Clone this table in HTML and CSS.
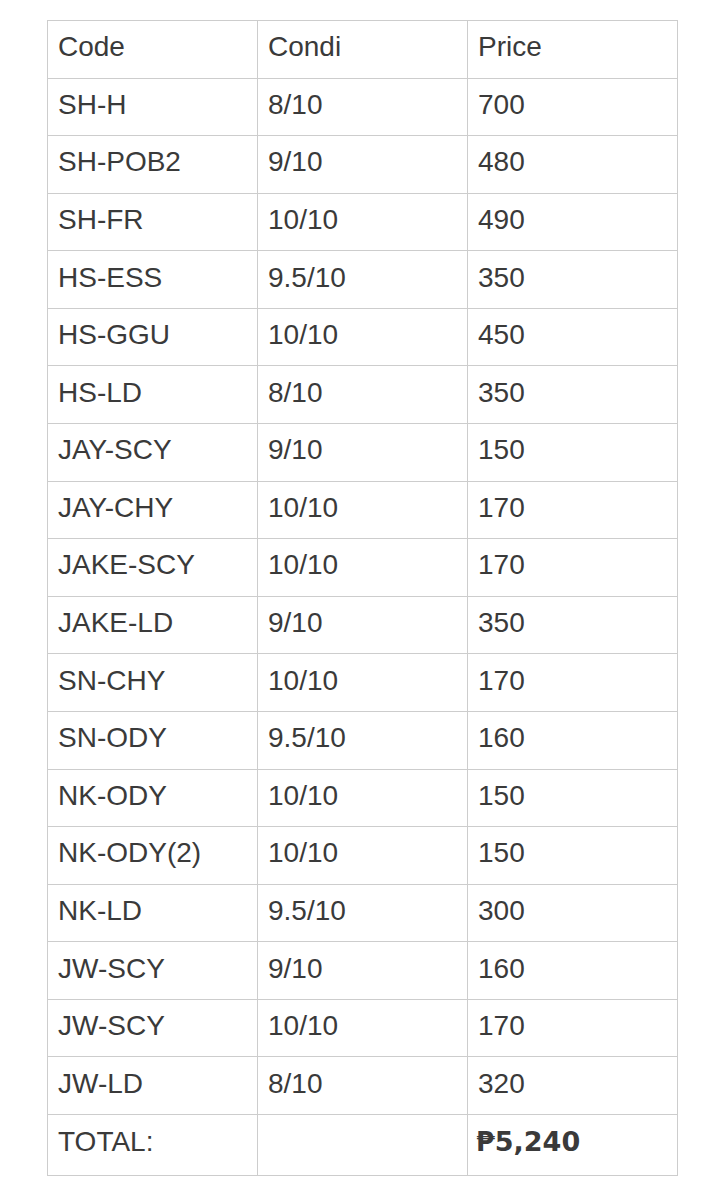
FILE: index.html
```html
<!DOCTYPE html>
<html>
<head>
<meta charset="utf-8">
<link rel="stylesheet" href="styles.css">
</head>
<body>
<table class="sheet">
<tbody>
<tr><td>Code</td><td>Condi</td><td>Price</td></tr>
<tr><td>SH-H</td><td>8/10</td><td>700</td></tr>
<tr><td>SH-POB2</td><td>9/10</td><td>480</td></tr>
<tr><td>SH-FR</td><td>10/10</td><td>490</td></tr>
<tr><td>HS-ESS</td><td>9.5/10</td><td>350</td></tr>
<tr><td>HS-GGU</td><td>10/10</td><td>450</td></tr>
<tr><td>HS-LD</td><td>8/10</td><td>350</td></tr>
<tr><td>JAY-SCY</td><td>9/10</td><td>150</td></tr>
<tr><td>JAY-CHY</td><td>10/10</td><td>170</td></tr>
<tr><td>JAKE-SCY</td><td>10/10</td><td>170</td></tr>
<tr><td>JAKE-LD</td><td>9/10</td><td>350</td></tr>
<tr><td>SN-CHY</td><td>10/10</td><td>170</td></tr>
<tr><td>SN-ODY</td><td>9.5/10</td><td>160</td></tr>
<tr><td>NK-ODY</td><td>10/10</td><td>150</td></tr>
<tr><td>NK-ODY(2)</td><td>10/10</td><td>150</td></tr>
<tr><td>NK-LD</td><td>9.5/10</td><td>300</td></tr>
<tr><td>JW-SCY</td><td>9/10</td><td>160</td></tr>
<tr><td>JW-SCY</td><td>10/10</td><td>170</td></tr>
<tr><td>JW-LD</td><td>8/10</td><td>320</td></tr>
<tr class="total"><td>TOTAL:</td><td></td><td class="sum">₱5,240</td></tr>
</tbody>
</table>
</body>
</html>
```

FILE: styles.css
```css
html, body {
  margin: 0;
  padding: 0;
  background: #ffffff;
}
body {
  padding: 20px 0 0 47px;
  font-family: "Liberation Sans", Arial, sans-serif;
  color: #3a3a3a;
}
.sheet {
  border-collapse: collapse;
  table-layout: fixed;
  width: 630px;
}
.sheet td {
  width: 210px;
  height: 57.58px;
  box-sizing: border-box;
  border: 1px solid #cdcdcd;
  padding: 0 0 4px 10px;
  font-size: 28px;
  line-height: 32px;
  vertical-align: middle;
  white-space: nowrap;
  overflow: hidden;
}
.sheet tr.total td {
  height: 61px;
  padding-bottom: 6px;
}
.sheet td.sum {
  font-weight: bold;
  font-family: "DejaVu Sans", "Liberation Sans", sans-serif;
  font-size: 27px;
  padding-left: 8px;
}
```
